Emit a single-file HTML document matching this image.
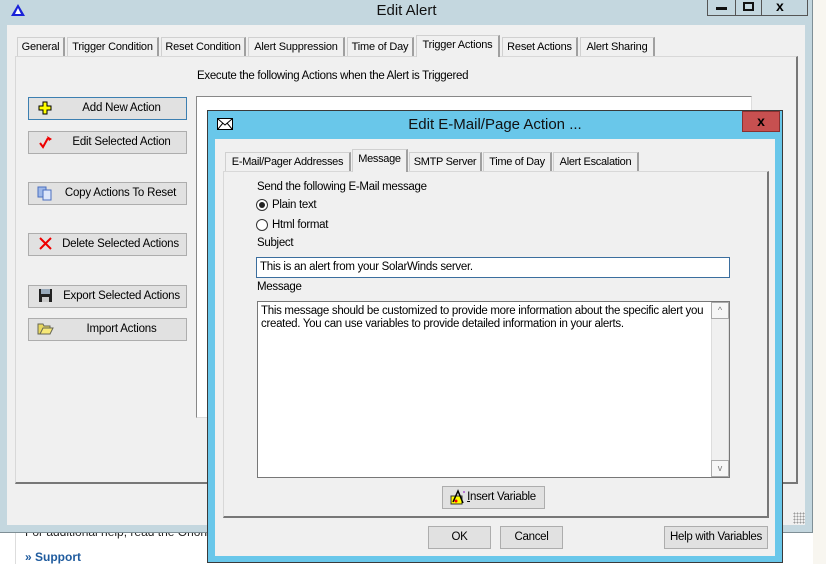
<!DOCTYPE html>
<html><head><meta charset="utf-8"><style>
*{box-sizing:border-box;margin:0;padding:0}
body{width:826px;height:564px;overflow:hidden;background:#fff;font-family:"Liberation Sans",sans-serif;font-size:12px;color:#000;position:relative}
.a{position:absolute}
.btn{position:absolute;background:#e1e1e1;border:1px solid #adadad;text-align:center;line-height:21px;font-size:11.5px;letter-spacing:-0.2px}
.tab{position:absolute;top:37px;height:19px;line-height:19px;background:#f0f0f0;border:1px solid #d0d0d0;border-bottom:none;text-align:center;font-size:11px;letter-spacing:-0.2px;border-right:2px solid #a0a0a0;white-space:nowrap;overflow:hidden}
.dt{position:absolute;height:20px;line-height:19px;border:1px solid #d0d0d0;border-bottom:none;border-right:2px solid #a0a0a0;text-align:center;background:#f0f0f0;font-size:11px;letter-spacing:-0.3px;white-space:nowrap;overflow:hidden}
.n{font-size:11.5px;letter-spacing:-0.3px}
</style></head><body>
<div class="a" style="left:813px;top:0;width:13px;height:564px;background:#f8f6f0"></div>
<div class="a" style="left:15px;top:533px;width:1px;height:31px;background:#ddd"></div>
<div class="a" style="left:25px;top:525px;font-size:12px;color:#222">For additional help, read the Orion Ad</div>
<div class="a" style="left:25px;top:550px;font-size:12px;font-weight:bold;color:#1f5b9e">» Support</div>
<div class="a" style="left:0;top:0;width:813px;height:533px;background:#c4d7df;border-right:1px solid #7f8f96;border-bottom:1px solid #7f8f96"></div>
<svg class="a" style="left:10px;top:3px" width="16" height="14" viewBox="0 0 16 14"><path d="M8 1L15 13H1Z" fill="#1a22d8"/><path d="M8 5L11 11H5Z" fill="#fff"/></svg>
<div class="a" style="left:0;top:2px;width:813px;text-align:center;font-size:15px;color:#111">Edit Alert</div>
<div class="a" style="left:707px;top:-1px;width:101px;height:17px;border:1px solid #555;background:#c4d7df"></div>
<div class="a" style="left:735px;top:0;width:1px;height:16px;background:#555"></div>
<div class="a" style="left:761px;top:0;width:1px;height:16px;background:#555"></div>
<div class="a" style="left:716px;top:7px;width:11px;height:3px;background:#111"></div>
<div class="a" style="left:743px;top:2px;width:11px;height:9px;border:2px solid #111"></div>
<div class="a" style="left:776px;top:-2px;font-weight:bold;font-size:14px">x</div>
<div class="a" style="left:7px;top:25px;width:798px;height:500px;background:#f0f0f0"></div>
<div class="tab" style="left:17px;width:48px">General</div>
<div class="tab" style="left:67px;width:92px">Trigger Condition</div>
<div class="tab" style="left:161px;width:85px">Reset Condition</div>
<div class="tab" style="left:248px;width:97px">Alert Suppression</div>
<div class="tab" style="left:347px;width:67px">Time of Day</div>
<div class="tab" style="left:502px;width:76px">Reset Actions</div>
<div class="tab" style="left:580px;width:75px">Alert Sharing</div>
<div class="a" style="left:15px;top:56px;width:783px;height:428px;background:#f0f0f0;border:1px solid #d8d8d8;border-right:2px solid #777;border-bottom:2px solid #777"></div>
<div class="tab" style="left:416px;top:35px;width:84px;height:22px;z-index:2">Trigger Actions</div>
<div class="a n" style="left:197px;top:70px">Execute the following Actions when the Alert is Triggered</div>
<div class="a" style="left:196px;top:96px;width:556px;height:322px;background:#fff;border:1px solid #888;border-right-color:#ddd;border-bottom-color:#ddd"></div>
<div class="btn" style="left:28px;top:97px;width:159px;height:23px;border-color:#3c7fb1;padding-left:28px">Add New Action</div>
<svg class="a" style="left:38px;top:101px" width="14" height="14" viewBox="0 0 14 14"><path d="M5 1H9V5H13V9H9V13H5V9H1V5H5Z" fill="#ffff00" stroke="#000"/></svg>
<div class="btn" style="left:28px;top:131px;width:159px;height:23px;padding-left:28px">Edit Selected Action</div>
<svg class="a" style="left:38px;top:134px" width="16" height="16" viewBox="0 0 16 16"><path d="M2 9L5 13L10 4" stroke="#e00" stroke-width="2" fill="none"/><path d="M9 2L14 5L11 7Z" fill="#e00"/></svg>
<div class="btn" style="left:28px;top:182px;width:159px;height:23px;padding-left:26px">Copy Actions To Reset</div>
<svg class="a" style="left:37px;top:185px" width="16" height="16" viewBox="0 0 16 16"><rect x="1" y="2" width="8" height="10" fill="#9fb8e8" stroke="#4a6fc0"/><rect x="6" y="5" width="8" height="10" fill="#dde6fa" stroke="#4a6fc0"/></svg>
<div class="btn" style="left:28px;top:233px;width:159px;height:23px;padding-left:26px">Delete Selected Actions</div>
<svg class="a" style="left:38px;top:236px" width="15" height="15" viewBox="0 0 15 15"><path d="M2 2L13 13M13 2L2 13" stroke="#e00" stroke-width="2"/></svg>
<div class="btn" style="left:28px;top:285px;width:159px;height:23px;padding-left:28px">Export Selected Actions</div>
<svg class="a" style="left:38px;top:288px" width="15" height="15" viewBox="0 0 15 15"><rect x="1" y="1" width="13" height="13" fill="#222"/><rect x="3" y="1" width="9" height="5" fill="#9ab"/><rect x="4" y="9" width="7" height="5" fill="#ccc"/></svg>
<div class="btn" style="left:28px;top:318px;width:159px;height:23px;padding-left:28px">Import Actions</div>
<svg class="a" style="left:37px;top:320px" width="17" height="15" viewBox="0 0 17 15"><path d="M1 4H6L7 6H13V14H1Z" fill="#e8d860" stroke="#665"/><path d="M3 14L6 8H16L13 14Z" fill="#f6e878" stroke="#665"/></svg>
<div class="a" style="left:793px;top:512px;width:12px;height:12px;background:radial-gradient(circle,#999 1px,transparent 1px) 0 0/3px 3px"></div>
<div class="a" style="left:207px;top:110px;width:576px;height:453px;background:#69c7ea;border:1px solid #3a3a3a"></div>
<svg class="a" style="left:217px;top:118px" width="16" height="12" viewBox="0 0 16 12"><rect x="0.5" y="0.5" width="15" height="11" fill="#fff" stroke="#000"/><path d="M1 1L8 7L15 1M1 11L6 5M15 11L10 5" stroke="#000" fill="none"/></svg>
<div class="a" style="left:207px;top:116px;width:576px;text-align:center;font-size:15px;color:#111">Edit E-Mail/Page Action ...</div>
<div class="a" style="left:742px;top:111px;width:38px;height:21px;background:#c75050;border:1px solid #8a3030;color:#000;font-weight:bold;text-align:center;line-height:18px;font-size:14px">x</div>
<div class="a" style="left:215px;top:139px;width:560px;height:417px;background:#f0f0f0"></div>
<div class="dt" style="left:225px;top:152px;width:126px">E-Mail/Pager Addresses</div>
<div class="dt" style="left:409px;top:152px;width:73px">SMTP Server</div>
<div class="dt" style="left:483px;top:152px;width:69px">Time of Day</div>
<div class="dt" style="left:553px;top:152px;width:86px">Alert Escalation</div>
<div class="a" style="left:223px;top:171px;width:546px;height:347px;border:1px solid #d8d8d8;border-right:2px solid #777;border-bottom:2px solid #777;background:#f0f0f0"></div>
<div class="dt" style="left:352px;top:149px;width:56px;height:23px;z-index:2">Message</div>
<div class="a n" style="left:257px;top:181px">Send the following E-Mail message</div>
<div class="a" style="left:256px;top:199px;width:12px;height:12px;border-radius:50%;border:1px solid #333;background:#fff"></div>
<div class="a" style="left:259px;top:202px;width:6px;height:6px;border-radius:50%;background:#222"></div>
<div class="a n" style="left:272px;top:199px">Plain text</div>
<div class="a" style="left:256px;top:219px;width:12px;height:12px;border-radius:50%;border:1px solid #333;background:#fff"></div>
<div class="a n" style="left:272px;top:219px">Html format</div>
<div class="a n" style="left:257px;top:237px">Subject</div>
<div class="a n" style="left:256px;top:257px;width:474px;height:21px;background:#fff;border:1px solid #3b6e9e;padding-left:3px;line-height:19px">This is an alert from your SolarWinds server.</div>
<div class="a n" style="left:257px;top:281px">Message</div>
<div class="a n" style="left:257px;top:301px;width:473px;height:177px;background:#fff;border:1px solid #777;padding:3px 22px 0 3px;line-height:13px">This message should be customized to provide more information about the specific alert you created. You can use variables to provide detailed information in your alerts.</div>
<div class="a" style="left:711px;top:302px;width:18px;height:175px;background:#f0f0f0;border:1px solid #ddd"></div>
<div class="a" style="left:711px;top:302px;width:18px;height:17px;border:1px solid #aaa;background:#f6f6f6;text-align:center;font-size:9px;color:#777;line-height:15px">^</div>
<div class="a" style="left:711px;top:460px;width:18px;height:17px;border:1px solid #aaa;background:#f6f6f6;text-align:center;font-size:9px;color:#777;line-height:15px">v</div>
<div class="btn n" style="left:442px;top:486px;width:103px;height:23px;padding-left:16px"><u>I</u>nsert Variable</div>
<svg class="a" style="left:450px;top:489px" width="18" height="17" viewBox="0 0 18 17"><rect x="1" y="7" width="11" height="8" fill="#ff0" stroke="#333"/><path d="M3 13L8 2L13 14" stroke="#000" stroke-width="1.5" fill="none"/><circle cx="6" cy="12" r="1.5" fill="#e00"/><circle cx="14" cy="3" r="1" fill="#a5c"/></svg>
<div class="btn n" style="left:428px;top:526px;width:63px;height:23px">OK</div>
<div class="btn n" style="left:500px;top:526px;width:63px;height:23px">Cancel</div>
<div class="btn n" style="left:664px;top:526px;width:104px;height:23px">Help with Variables</div>
</body></html>
